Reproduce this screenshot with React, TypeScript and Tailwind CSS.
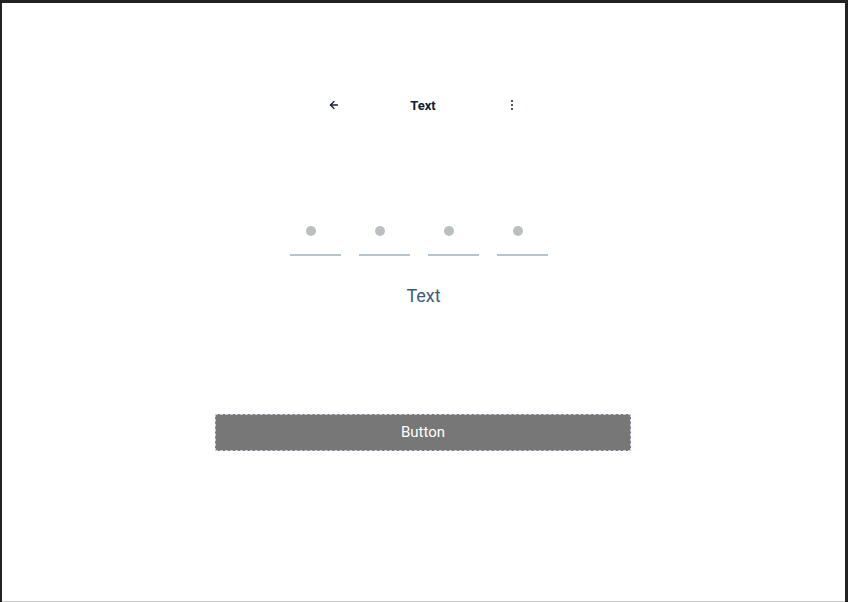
import React from "react";

function ArrowLeft() {
  return (
    <svg width="12" height="12" viewBox="0 0 24 24" fill="none" stroke="#0f1f33" strokeWidth="2.6" strokeLinecap="round" strokeLinejoin="round">
      <path d="M19 12H5" />
      <path d="M12 19l-7-7 7-7" />
    </svg>
  );
}

function Kebab() {
  return (
    <div className="flex flex-col items-center gap-[1.5px]">
      <span className="block w-[2.5px] h-[2.5px] rounded-full bg-[#0f1f33]" />
      <span className="block w-[2.5px] h-[2.5px] rounded-full bg-[#0f1f33]" />
      <span className="block w-[2.5px] h-[2.5px] rounded-full bg-[#0f1f33]" />
    </div>
  );
}

function Cell() {
  return (
    <div className="flex flex-col w-[51px]">
      <span className="block w-[10px] h-[10px] ml-[16px] rounded-full bg-[#bcbfc2]" />
      <span className="block w-full h-[1.5px] mt-[18px] bg-[#b7c5cf]" />
    </div>
  );
}

export default function App() {
  return (
    <div
      className="w-[848px] h-[602px] bg-[#222] pl-[2px] pt-[3px] pr-[3px]"
      style={{ fontFamily: "Roboto, Inter, 'Liberation Sans', sans-serif" }}
    >
      <div className="w-full h-full bg-white border-b border-[#c4c4c4] flex flex-col items-center">
        <div className="mt-[90px] w-[202px] h-[24px] flex items-center mr-[1px]">
          <div className="w-[24px] flex justify-center"><ArrowLeft /></div>
          <span className="flex-1 text-center text-[13px] font-bold text-[#0f1f33] leading-none">Text</span>
          <div className="w-[24px] flex justify-center"><Kebab /></div>
        </div>
        <div className="mt-[109px] flex gap-[18px] mr-[9px]">
          <Cell />
          <Cell />
          <Cell />
          <Cell />
        </div>
        <div className="mt-[28px] text-[18px] leading-[24px] text-[#3f5a80]">Text</div>
        <button className="mt-[106px] w-[416px] h-[37px] bg-[#777777] border border-dashed border-[#c9cbe0] text-white text-[15px] flex items-center justify-center mr-[1px]">
          Button
        </button>
      </div>
    </div>
  );
}
